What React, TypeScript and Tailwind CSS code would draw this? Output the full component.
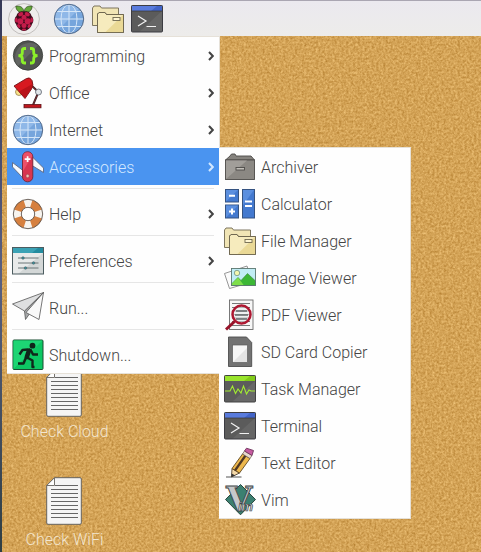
import type { ReactNode } from "react";

function Icon({ children }: { children: ReactNode }) {
  return (
    <svg viewBox="0 0 32 32" className="h-8 w-8 shrink-0 overflow-visible" aria-hidden="true">
      {children}
    </svg>
  );
}

function RaspberryIcon() {
  return (
    <Icon>
      <circle cx="16" cy="16" r="15.4" fill="#efedec" stroke="#c2bfbd" strokeWidth="1" />
      <path d="M15.500 9.500C11 9.800 8 7.500 7.800 3.200C11.500 2.500 15 3.800 15.800 8Z" fill="#64a83a" stroke="#24331a" strokeWidth="0.600" />
      <path d="M16.300 9.500C21 9.800 24 7.500 24.200 3.200C20.500 2.500 17 3.800 16.200 8Z" fill="#64a83a" stroke="#24331a" strokeWidth="0.600" />
      <path d="M16 8.500C20 7.500 23 10 23.500 13C26 15 25.800 19 24 21C23 25 19 28 16 28C13 28 9 25 8 21C6.200 19 6 15 8.500 13C9 10 12 7.500 16 8.500Z" fill="#3d0b1b" />
      <g fill="#c31c4a">
        <ellipse cx="12.700" cy="11.200" rx="2.700" ry="1.900" transform="rotate(-25 12.700 11.200)" />
        <ellipse cx="19.300" cy="11.200" rx="2.700" ry="1.900" transform="rotate(25 19.300 11.200)" />
        <circle cx="16" cy="14.200" r="2.500" />
        <circle cx="12.300" cy="18.300" r="3.100" />
        <circle cx="19.700" cy="18.300" r="3.100" />
        <ellipse cx="8.300" cy="17" rx="1.300" ry="2.600" />
        <ellipse cx="23.700" cy="17" rx="1.300" ry="2.600" />
        <circle cx="16" cy="22.600" r="2.500" />
        <ellipse cx="10.800" cy="23" rx="1.500" ry="2" transform="rotate(-35 10.800 23)" />
        <ellipse cx="21.200" cy="23" rx="1.500" ry="2" transform="rotate(35 21.200 23)" />
        <ellipse cx="16" cy="26.400" rx="2.200" ry="1" />
      </g>
    </Icon>
  );
}

function GlobeIcon() {
  return (
    <Icon>
      <circle cx="16" cy="16" r="14.700" fill="#76a5dc" />
      <path d="M5.600 26.400A14.700 14.700 0 0 1 26.400 5.600Z" fill="#8fb8e8" />
      <g fill="none" stroke="#d5e6f8" strokeWidth="1">
        <path d="M16 1.500V30.500M1.500 16H30.500M4 8.500H28M4 23.500H28" />
        <ellipse cx="16" cy="16" rx="8" ry="14.500" />
      </g>
      <circle cx="16" cy="16" r="14.700" fill="none" stroke="#4a5f7d" strokeWidth="0.900" />
    </Icon>
  );
}

function FoldersIcon() {
  return (
    <Icon>
      <g stroke="#6f6850" strokeWidth="0.900">
        <path d="M0.500 22.500V5L2 3H8L9.500 5H26.500V22.500Z" fill="#f1e5b5" />
        <path d="M5.500 29.500V11L7 9.500H13L14.500 11.500H31.500V29.500Z" fill="#f6ebbd" />
        <path d="M13 29.500L31 12V29.500Z" fill="#ead996" stroke="none" />
        <path d="M5.500 29.500V11L7 9.500H13L14.500 11.500H31.500V29.500Z" fill="none" />
        <rect x="21" y="14.500" width="7" height="3" fill="#fff6d2" />
      </g>
    </Icon>
  );
}

function TerminalIcon() {
  return (
    <Icon>
      <rect x="0.500" y="2.500" width="31" height="26.500" rx="1" fill="#5b5b5b" />
      <path d="M8 29L31 8V29Z" fill="#666" />
      <rect x="0.500" y="2.500" width="31" height="5.500" fill="#4264c8" />
      <path d="M1 8V3H26L20 8Z" fill="#597bdd" />
      <path d="M0.500 8H31.500" stroke="#333" strokeWidth="0.700" />
      <rect x="0.500" y="2.500" width="31" height="26.500" rx="1" fill="none" stroke="#3c3c42" />
      <path d="M7 13L15 18L7 23M15.500 23.500H25" fill="none" stroke="#f2f2f2" strokeWidth="1.200" />
    </Icon>
  );
}

function ProgrammingIcon() {
  return (
    <Icon>
      <circle cx="16" cy="15.500" r="14.700" fill="#505350" stroke="#3a3d3a" strokeWidth="0.800" />
      <path d="M6 26A14.500 14.500 0 0 1 26 5.500Z" fill="#626562" />
      <g fill="none" stroke="#8cf02a" strokeWidth="2.800">
        <path d="M14 8.500H12.500Q10.300 8.500 10.300 10.700V13Q10.300 15.500 6.500 15.700Q10.300 16 10.300 18.500V20.800Q10.300 23 12.500 23H14" />
        <path d="M18 8.500H19.500Q21.700 8.500 21.700 10.700V13Q21.700 15.500 25.500 15.700Q21.700 16 21.700 18.500V20.800Q21.700 23 19.500 23H18" />
      </g>
    </Icon>
  );
}

function OfficeIcon() {
  return (
    <Icon>
      <circle cx="7" cy="15" r="3.500" fill="#f8e28b" stroke="#8b7440" strokeWidth="0.700" />
      <path d="M20 9L26.500 15L21 28" fill="none" stroke="#3a2225" strokeWidth="2" />
      <path d="M20 9L26.500 15L21 28" fill="none" stroke="#8e3338" strokeWidth="0.700" />
      <path d="M2 9L14.500 1.500Q18 -0.500 20 3.500Q22 8 19.500 12L13 21.500Z" fill="#d81920" stroke="#6f1216" strokeWidth="0.900" />
      <path d="M7 14.500L20.500 7Q20.500 10 19.200 12L13 21Z" fill="#b91219" />
      <circle cx="26.500" cy="15" r="3" fill="#e2e6ea" stroke="#59606a" strokeWidth="0.800" />
      <rect x="12" y="27.500" width="17" height="3.300" fill="#c1171e" stroke="#5e1216" strokeWidth="0.800" />
    </Icon>
  );
}

function AccessoriesIcon() {
  return (
    <Icon>
      <path d="M0.500 11.500V16L11 27V19.500Z" fill="#f7f9fc" stroke="#5d6880" strokeWidth="0.900" />
      <path d="M20 5.500L31.500 17V21.500L20 14.500Z" fill="#f7f9fc" stroke="#5d6880" strokeWidth="0.900" />
      <rect x="10.500" y="0.800" width="10.300" height="30" rx="5" fill="#d8354f" stroke="#742537" strokeWidth="0.900" />
      <path d="M11 20V6Q11 1.300 15.600 1.300Q19.500 1.300 20.300 5Z" fill="#ec5068" />
      <path d="M15.600 5.300V11M12.700 8.100H18.500" stroke="#fff" strokeWidth="1.700" />
      <circle cx="15.600" cy="25" r="1.700" fill="#efc0b3" stroke="#8e3b42" strokeWidth="0.500" />
    </Icon>
  );
}

function HelpIcon() {
  return (
    <Icon>
      <circle cx="16" cy="16" r="10.700" fill="none" stroke="#f7f4ef" strokeWidth="8" />
      <circle
        cx="16"
        cy="16"
        r="10.700"
        fill="none"
        stroke="#d6803f"
        strokeWidth="8"
        pathLength="80"
        strokeDasharray="12 8"
        strokeDashoffset="-4"
      />
      <circle cx="16" cy="16" r="14.700" fill="none" stroke="#5e544d" strokeWidth="0.900" />
      <circle cx="16" cy="16" r="6.700" fill="none" stroke="#5e544d" strokeWidth="0.900" />
    </Icon>
  );
}

function PreferencesIcon() {
  return (
    <Icon>
      <rect x="0.500" y="2.500" width="31" height="26.500" fill="#e8eaea" />
      <path d="M6 29L31 8V29Z" fill="#d3d7d7" />
      <rect x="0.500" y="2.500" width="31" height="5.500" fill="#238ca0" />
      <path d="M1 8V3H26L20 8Z" fill="#3ba2b5" />
      <path d="M6 13H26.500M6 18H26.500M6 23H26.500" stroke="#5f696c" strokeWidth="0.900" />
      <g fill="#3d8e99" stroke="#465b60" strokeWidth="0.500">
        <circle cx="11" cy="13" r="1.300" />
        <circle cx="21.500" cy="18" r="1.300" />
        <circle cx="13.500" cy="23" r="1.300" />
      </g>
      <rect x="0.500" y="2.500" width="31" height="26.500" fill="none" stroke="#4c5c60" />
    </Icon>
  );
}

function RunIcon() {
  return (
    <Icon>
      <g stroke="#555" strokeWidth="0.800" strokeLinejoin="round">
        <path d="M31.500 0.500L12.500 19L13.500 27.500L17 22.500Z" fill="#a9abad" />
        <path d="M31.500 0.500L0.500 12L12.500 19Z" fill="#dedfe0" />
        <path d="M31.500 0.500L14 20.500L27 27.500Z" fill="#f9f9f9" />
      </g>
    </Icon>
  );
}

function ShutdownIcon() {
  return (
    <Icon>
      <rect x="1" y="1" width="30" height="29.500" rx="1" fill="#0cc763" stroke="#184d31" />
      <path d="M1.500 30V1.500H30.500Z" fill="#1dd574" />
      <circle cx="20.500" cy="6.700" r="2.900" fill="#10251a" />
      <path d="M17 11.500L14.800 18" stroke="#10251a" strokeWidth="4.500" strokeLinecap="round" />
      <path
        d="M16 10.500L10.500 11L7.500 15.500M18.500 10.500L21 15.500L26 15.500M14 18.500L11.500 24.500L6 24.500M15 18.500L20.500 21.500L20.500 28H22.500"
        fill="none"
        stroke="#10251a"
        strokeWidth="2.400"
        strokeLinejoin="round"
      />
    </Icon>
  );
}

function ArchiverIcon() {
  return (
    <Icon>
      <g stroke="#4d4b48" strokeWidth="0.900">
        <path d="M1.500 9L6 5L7.500 3H11L12 5H27L30.500 9Z" fill="#86837e" />
        <rect x="1.500" y="9" width="29" height="19.500" fill="#8b8883" />
        <path d="M2 28V9.500H23Z" fill="#a19e99" stroke="none" />
        <rect x="12" y="16.500" width="8.500" height="2.500" fill="#c2bfb9" />
      </g>
    </Icon>
  );
}

function CalculatorIcon() {
  return (
    <Icon>
      <g fill="#4379cf" stroke="#355381" strokeWidth="1">
        <rect x="1.500" y="1.500" width="13" height="12.500" />
        <rect x="1.500" y="17" width="13" height="13" />
        <rect x="18.500" y="1.500" width="12" height="28.500" />
      </g>
      <path d="M2 13.500V2H14ZM2 29.500V17.500H14ZM19 17V2H30Z" fill="#5b8fdf" />
      <path d="M5 7.700H11M5 23.500H11M8 20.500V26.500M21 13.500H28M21 18H28" stroke="#fff" strokeWidth="2" />
    </Icon>
  );
}

function ImageIcon() {
  return (
    <Icon>
      <path d="M0.500 11.500L23 4L28 20L5.500 26.500Z" fill="#fbfbfb" stroke="#7b7b7b" strokeWidth="0.800" />
      <rect x="7.500" y="6.500" width="24" height="17" fill="#c1edf5" />
      <circle cx="13" cy="11" r="2.700" fill="#f3f6ad" stroke="#719287" strokeWidth="0.800" />
      <path d="M7.500 22L14 15.500L17 18.500L23.500 11.500L31.500 19V23.500H7.500Z" fill="#3cb735" stroke="#39813a" strokeWidth="0.600" />
      <path d="M7.500 22L14 15.500L20 23.500H7.500Z" fill="#7ede4b" />
      <rect x="7.500" y="6.500" width="24" height="17" fill="none" stroke="#5b7770" strokeWidth="0.900" />
    </Icon>
  );
}

function PdfIcon() {
  return (
    <Icon>
      <rect x="5.500" y="1" width="23.500" height="29.500" fill="#f7f7f7" stroke="#6a6a6a" strokeWidth="0.900" />
      <path d="M8 4.500H26M8 8.500H26M8 12H26M8 15.500H26M8 19H26M8 22.500H26M8 26.500H26" stroke="#777" strokeWidth="1" />
      <circle cx="17.500" cy="15.500" r="9" fill="#e7ebec" fillOpacity="0.550" stroke="#ad1731" strokeWidth="2.500" />
      <path d="M12 12H23M11 16H24M12 20H23" stroke="#626668" strokeWidth="1.500" />
      <path d="M10.500 22.500L2 30.500" stroke="#971329" strokeWidth="3" />
    </Icon>
  );
}

function SdCardIcon() {
  return (
    <Icon>
      <path d="M4.500 1H22.500L27.700 6.500V30.500H4.500Z" fill="#727272" stroke="#4e4e4e" strokeWidth="0.900" />
      <rect x="8.500" y="9" width="15" height="17.500" fill="#f6f6f6" stroke="#5b5b5b" strokeWidth="0.700" />
      <path d="M9 26L23 12V26Z" fill="#e3e3e3" />
    </Icon>
  );
}

function TaskIcon() {
  return (
    <Icon>
      <rect x="0.500" y="2.500" width="31" height="26.500" rx="1" fill="#5c5c5c" />
      <path d="M8 29L31 8V29Z" fill="#686868" />
      <rect x="0.500" y="2.500" width="31" height="5.500" fill="#81cb19" />
      <path d="M1 8V3H26L20 8Z" fill="#99e42c" />
      <rect x="0.500" y="2.500" width="31" height="26.500" rx="1" fill="none" stroke="#434343" />
      <path d="M1 18H6L8.500 13L11.500 20.500L14 16L17 20L19.500 13L22.500 21L25 17L27 18H31" fill="none" stroke="#a2ec32" strokeWidth="1.100" />
    </Icon>
  );
}

function EditorIcon() {
  return (
    <Icon>
      <path d="M2 30H17.500" stroke="#555" strokeWidth="1" />
      <path d="M8 21.500L7.500 30L15.500 26Z" fill="#f5d9a8" stroke="#514130" strokeWidth="0.900" />
      <path d="M8 21.500L18.500 7L26 11.500L15.500 26Z" fill="#eeb84c" stroke="#604820" strokeWidth="0.900" />
      <path d="M11 23.500L21.500 8.500" stroke="#4e3724" strokeWidth="2.200" />
      <path d="M18.500 7L20.500 4L28 8.500L26 11.500Z" fill="#e7d9cd" stroke="#6b5a51" strokeWidth="0.700" />
      <path d="M20.500 4L22.500 1.200L29.500 3.500L28 8.500Z" fill="#c65aa0" stroke="#6d345b" strokeWidth="0.900" />
      <path d="M7.500 26.500L7.500 30L11 28.300Z" fill="#333" />
    </Icon>
  );
}

function VimIcon() {
  return (
    <Icon>
      <path d="M16.500 0.500L31.500 15.500L16.500 30.800L1.500 15.500Z" fill="#3b8071" stroke="#29483e" />
      <text x="2" y="27" fontSize="34" className="font-['DejaVu_Serif'] font-bold" fill="#c6c8ca" stroke="#404648" strokeWidth="0.900">
        V
        <tspan x="14" fontSize="13" className="font-['Liberation_Sans'] italic" fill="#e0e1e2" strokeWidth="0.700">
          im
        </tspan>
      </text>
    </Icon>
  );
}

function FileIcon() {
  return (
    <svg viewBox="0 0 36 48" className="h-12 w-9" aria-hidden="true">
      <path d="M8.500 0.700H34Q35.300 0.700 35.300 2V46Q35.300 47.300 34 47.300H2Q0.700 47.300 0.700 46V8.500Z" fill="#f5f5f5" stroke="#66635e" />
      <path d="M8.500 0.700V8.500H0.700Z" fill="#fff" stroke="#66635e" strokeWidth="0.900" />
      <path d="M9 8.500H32M5 12.500H32M5 16.500H32M5 20.500H32M5 24.500H32M5 28.500H32M5 32.500H32M5 36.500H32M5 40.500H32" stroke="#666" strokeWidth="1.100" />
    </svg>
  );
}

function Chevron() {
  return (
    <svg viewBox="0 0 6 10" className="h-2.5 w-1.5 shrink-0" aria-hidden="true">
      <path d="M1 1L4.800 5L1 9" fill="none" stroke="currentColor" strokeWidth="2" />
    </svg>
  );
}

// grainy cork board behind everything
function Cork() {
  return (
    <svg className="absolute inset-0 h-full w-full" aria-hidden="true">
      <filter id="cork" x="0" y="0" width="100%" height="100%" colorInterpolationFilters="sRGB">
        <feTurbulence type="fractalNoise" baseFrequency="0.43" numOctaves="3" seed="4" />
        <feColorMatrix values="0.26 0.06 0 0 0.670  0.30 0.06 0 0 0.460  0.32 0.06 0 0 0.150  0 0 0 0 1" />
      </filter>
      <rect width="100%" height="100%" filter="url(#cork)" />
    </svg>
  );
}

const launchers = [
  { label: "Web Browser", icon: <GlobeIcon /> },
  { label: "File Manager", icon: <FoldersIcon /> },
  { label: "Terminal", icon: <TerminalIcon /> },
];

const accessories = [
  { label: "Archiver", icon: <ArchiverIcon /> },
  { label: "Calculator", icon: <CalculatorIcon /> },
  { label: "File Manager", icon: <FoldersIcon /> },
  { label: "Image Viewer", icon: <ImageIcon /> },
  { label: "PDF Viewer", icon: <PdfIcon /> },
  { label: "SD Card Copier", icon: <SdCardIcon /> },
  { label: "Task Manager", icon: <TaskIcon /> },
  { label: "Terminal", icon: <TerminalIcon /> },
  { label: "Text Editor", icon: <EditorIcon /> },
  { label: "Vim", icon: <VimIcon /> },
];

const groups = [
  [
    { label: "Programming", icon: <ProgrammingIcon />, more: true },
    { label: "Office", icon: <OfficeIcon />, more: true },
    { label: "Internet", icon: <GlobeIcon />, more: true },
    { label: "Accessories", icon: <AccessoriesIcon />, more: true, items: accessories },
  ],
  [{ label: "Help", icon: <HelpIcon />, more: true }],
  [{ label: "Preferences", icon: <PreferencesIcon />, more: true }],
  [{ label: "Run...", icon: <RunIcon /> }],
  [{ label: "Shutdown...", icon: <ShutdownIcon /> }],
];

function MenuItem({ item }: { item: any }) {
  const open = !!item.items;
  return (
    <li className="relative">
      <button
        type="button"
        aria-expanded={item.more ? open : undefined}
        className={`flex h-[37px] w-full items-center gap-[5px] px-[5px] text-left ${
          open ? "bg-[#4a94f0] text-[#d3e8ff]" : "text-[#444]"
        }`}
      >
        {item.icon}
        <span className="flex-1 pt-0.5 whitespace-nowrap">{item.label}</span>
        {item.more && <Chevron />}
      </button>
      {open && (
        <ul className="absolute -top-px left-full w-48 border-y border-r border-[#e6e1d8] bg-[#fefefe]">
          {item.items.map((sub: any) => (
            <MenuItem key={sub.label} item={sub} />
          ))}
        </ul>
      )}
    </li>
  );
}

export default function App() {
  return (
    <div className="relative flex min-h-screen overflow-hidden bg-[#d3a457] font-[Roboto,sans-serif] text-base font-light">
      <Cork />
      <div className="relative w-0.5 bg-linear-to-b from-[#343757] via-[#596080] to-[#2f3e43]" />

      <div className="relative flex flex-1 flex-col">
        <header className="flex h-9 items-center border-t border-[#aaa6b2] bg-linear-to-b from-[#ebe9ef] to-[#edecea] px-1.5">
          <button type="button" aria-label="Menu">
            <RaspberryIcon />
          </button>
          <nav className="ml-[13px] flex gap-[7px]">
            {launchers.map((l) => (
              <button key={l.label} type="button" aria-label={l.label}>
                {l.icon}
              </button>
            ))}
          </nav>
        </header>

        <main className="relative flex-1">
          <div className="flex w-[125px] flex-col items-center gap-[33px] pt-[333px] text-[#f2e6d0]">
            {["Check Cloud", "Check WiFi"].map((name) => (
              <button key={name} type="button" className="flex flex-col items-center gap-[3px]">
                <FileIcon />
                <span>{name}</span>
              </button>
            ))}
          </div>

          <div className="absolute top-0 left-[5px] w-[213px] border-t border-r border-b border-[#e6e1d8] bg-[#fefefe]">
            {groups.map((group, i) => (
              <div key={i}>
                {i > 0 && <hr className="mx-[5px] mt-[3px] mb-1.5 border-[#e6e6e6]" />}
                <ul>
                  {group.map((item) => (
                    <MenuItem key={item.label} item={item} />
                  ))}
                </ul>
              </div>
            ))}
          </div>
        </main>
      </div>
    </div>
  );
}
